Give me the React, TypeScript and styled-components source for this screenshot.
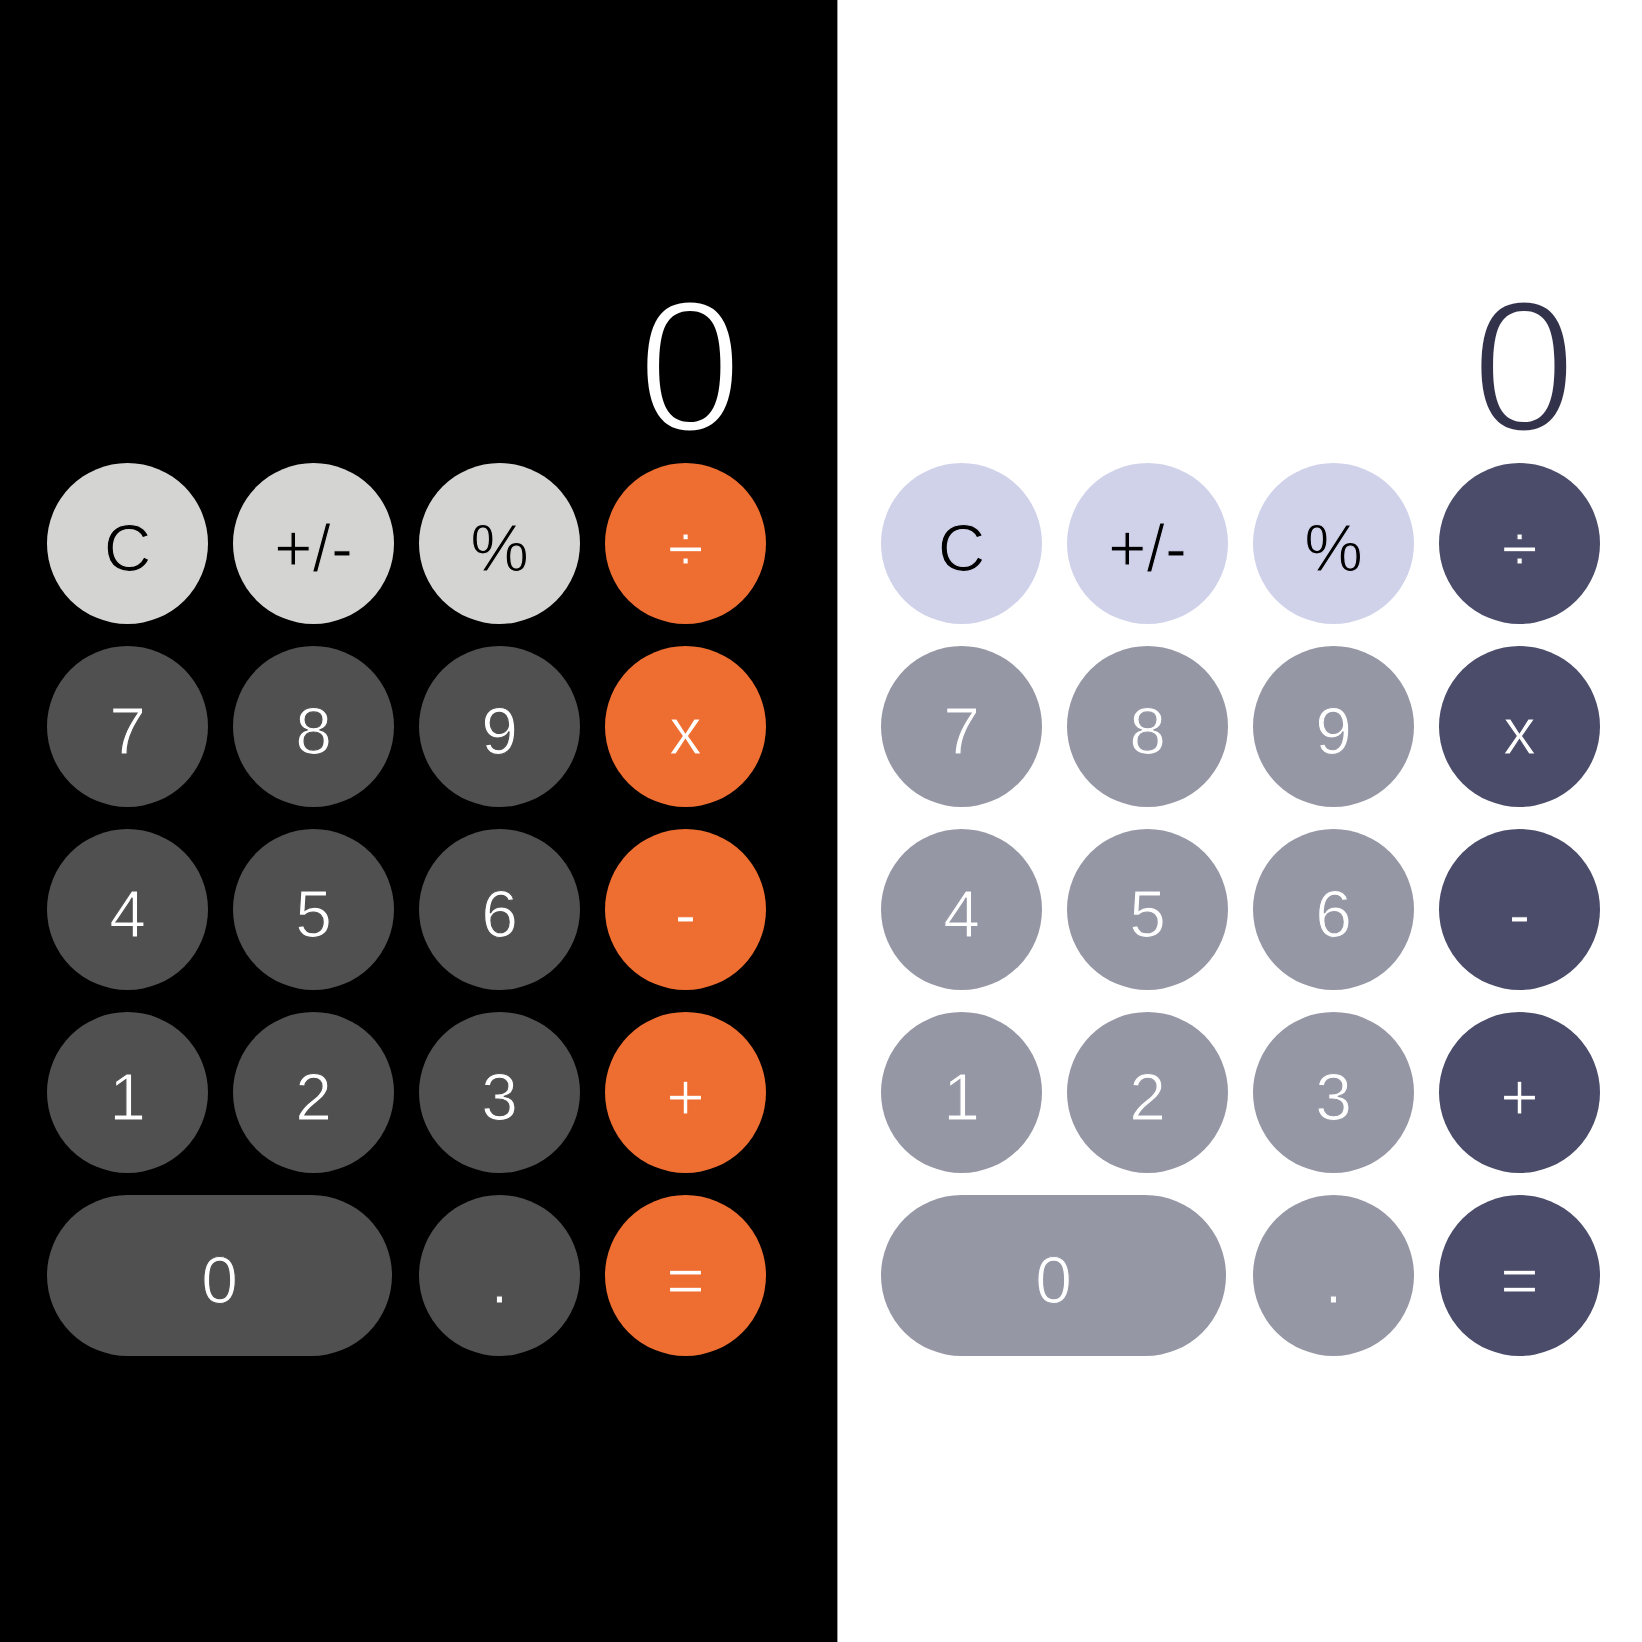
import React from "react";
import styled, { createGlobalStyle } from "styled-components";

const GlobalStyle = createGlobalStyle`
  html, body {
    margin: 0;
    padding: 0;
  }
  body {
    font-family: "Liberation Sans", Arial, sans-serif;
  }
`;

type Palette = {
  bg: string;
  display: string;
  fn: string;
  fnText: string;
  num: string;
  numText: string;
  op: string;
  opText: string;
  padLeft: number;
};

const dark: Palette = {
  bg: "#000000",
  display: "#ffffff",
  fn: "#d4d4d2",
  fnText: "#000000",
  num: "#505050",
  numText: "#ffffff",
  op: "#ee6d30",
  opText: "#ffffff",
  padLeft: 47,
};

const light: Palette = {
  bg: "#ffffff",
  display: "#32334a",
  fn: "#d0d2ea",
  fnText: "#000000",
  num: "#9597a5",
  numText: "#ffffff",
  op: "#4a4c69",
  opText: "#ffffff",
  padLeft: 43,
};

type Kind = "fn" | "num" | "op";

// Layout
const Page = styled.div`
  display: flex;
  min-height: 100vh;
  overflow: hidden;
`;

const Panel = styled.section<{ $p: Palette; $divider?: boolean }>`
  box-sizing: border-box;
  flex: ${({ $divider }) => ($divider ? "0 0 838px" : "1 1 auto")};
  background: ${({ $p }) => $p.bg};
  padding: 272px 0 0 ${({ $p }) => $p.padLeft}px;
  border-right: ${({ $divider }) => ($divider ? "1px solid #9a9a9a" : "none")};
`;

const Calculator = styled.div`
  width: 719px;
  display: flex;
  flex-direction: column;
`;

// thin the glyphs a little by stroking them in the background colour
const Display = styled.div<{ $p: Palette }>`
  height: 188px;
  margin-bottom: 3px;
  padding-right: 24px;
  text-align: right;
  font-size: 188px;
  line-height: 1;
  color: ${({ $p }) => $p.display};
  -webkit-text-stroke: 5px ${({ $p }) => $p.bg};
`;

const Keypad = styled.div`
  display: grid;
  grid-template-columns: repeat(4, 161px);
  grid-auto-rows: 161px;
  column-gap: 25px;
  row-gap: 22px;
`;

const Key = styled.button<{ $p: Palette; $kind: Kind; $wide?: boolean }>`
  box-sizing: border-box;
  grid-column: ${({ $wide }) => ($wide ? "span 2" : "auto")};
  width: ${({ $wide }) => ($wide ? "345px" : "161px")};
  height: 161px;
  border: none;
  border-radius: 80.5px;
  padding: 8px 0 0;
  display: flex;
  align-items: center;
  justify-content: center;
  font-family: "Liberation Sans", Arial, sans-serif;
  font-size: 66px;
  line-height: 1;
  cursor: pointer;
  background: ${({ $p, $kind }) => $p[$kind]};
  color: ${({ $p, $kind }) =>
    $kind === "fn" ? $p.fnText : $kind === "op" ? $p.opText : $p.numText};
  -webkit-text-stroke: 1.2px ${({ $p, $kind }) => $p[$kind]};
`;

const keys: { label: string; kind: Kind; wide?: boolean }[] = [
  { label: "C", kind: "fn" },
  { label: "+/-", kind: "fn" },
  { label: "%", kind: "fn" },
  { label: "÷", kind: "op" },
  { label: "7", kind: "num" },
  { label: "8", kind: "num" },
  { label: "9", kind: "num" },
  { label: "x", kind: "op" },
  { label: "4", kind: "num" },
  { label: "5", kind: "num" },
  { label: "6", kind: "num" },
  { label: "-", kind: "op" },
  { label: "1", kind: "num" },
  { label: "2", kind: "num" },
  { label: "3", kind: "num" },
  { label: "+", kind: "op" },
  { label: "0", kind: "num", wide: true },
  { label: ".", kind: "num" },
  { label: "=", kind: "op" },
];

const CalcPanel: React.FC<{ palette: Palette; divider?: boolean }> = ({
  palette,
  divider,
}) => (
  <Panel $p={palette} $divider={divider}>
    <Calculator>
      <Display $p={palette}>0</Display>
      <Keypad>
        {keys.map((k) => (
          <Key key={k.label} $p={palette} $kind={k.kind} $wide={k.wide}>
            {k.label}
          </Key>
        ))}
      </Keypad>
    </Calculator>
  </Panel>
);

const App: React.FC = () => (
  <>
    <GlobalStyle />
    <Page>
      <CalcPanel palette={dark} divider />
      <CalcPanel palette={light} />
    </Page>
  </>
);

export default App;
